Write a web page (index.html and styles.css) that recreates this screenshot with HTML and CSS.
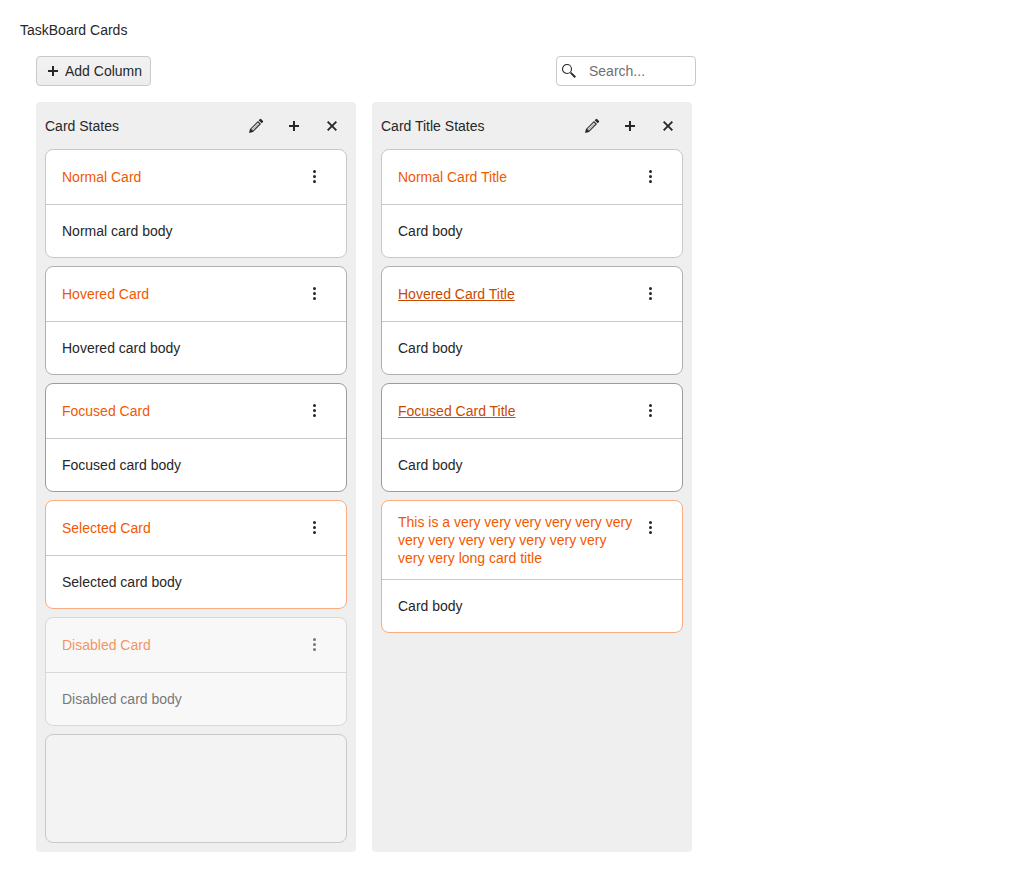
FILE: index.html
```html
<!DOCTYPE html>
<html lang="en">
<head>
<meta charset="utf-8">
<title>TaskBoard Cards</title>
<link rel="stylesheet" href="styles.css">
</head>
<body>
<svg class="sprite" aria-hidden="true">
  <symbol id="plus" viewBox="0 0 16 16"><path d="M7 3h2v4h4v2H9v4H7V9H3V7h4z"/></symbol>
  <symbol id="close" viewBox="0 0 16 16"><path d="M4.300 3 8 6.700 11.700 3 13 4.300 9.300 8 13 11.700 11.700 13 8 9.300 4.300 13 3 11.700 6.700 8 3 4.300z"/></symbol>
  <symbol id="pencil" viewBox="0 0 16 16"><path fill-rule="evenodd" d="M10 3 13 6 5 14 1 15 2 11zM9.900 4.500 3.300 11.100 4.900 12.700 11.500 6.100z"/><path d="M10.300 5.200 11 5.900 4.600 12.300 3.900 11.600z" opacity=".35"/><path d="M10.700 2.300 12 1Q12.500.700 13 1L15 3Q15.300 3.500 15 4L13.700 5.300z"/></symbol>
  <symbol id="dots" viewBox="0 0 16 16"><circle cx="7.500" cy="2.500" r="1.500"/><circle cx="7.500" cy="7.500" r="1.500"/><circle cx="7.500" cy="12.500" r="1.500"/></symbol>
  <symbol id="search" viewBox="0 0 16 16"><circle cx="6" cy="6" r="4.500" fill="none" stroke="currentColor" stroke-width="1.100"/><path d="M9 10.200 10.200 9 15 13.500 13.500 15z"/></symbol>
</svg>
<main class="page">
  <div class="page-title">TaskBoard Cards</div>
  <div class="board">
    <div class="toolbar">
      <button class="add-button" type="button"><svg class="icon"><use href="#plus"/></svg>Add Column</button>
      <label class="search"><svg class="icon" aria-hidden="true"><use href="#search"/></svg><input class="search-input" type="text" placeholder="Search..." aria-label="Search"></label>
    </div>
    <div class="columns">
      <section class="column">
        <header class="column-header">
          <div class="column-title">Card States</div>
          <button class="icon-button" type="button" aria-label="Edit column"><svg class="icon"><use href="#pencil"/></svg></button>
          <button class="icon-button" type="button" aria-label="Add card"><svg class="icon"><use href="#plus"/></svg></button>
          <button class="icon-button" type="button" aria-label="Delete column"><svg class="icon"><use href="#close"/></svg></button>
        </header>
        <div class="cards">
          <article class="card">
            <div class="card-header"><a class="card-title" href="#">Normal Card</a><button class="icon-button" type="button" aria-label="Card menu"><svg class="icon"><use href="#dots"/></svg></button></div>
            <div class="card-body">Normal card body</div>
          </article>
          <article class="card card-hovered">
            <div class="card-header"><a class="card-title" href="#">Hovered Card</a><button class="icon-button" type="button" aria-label="Card menu"><svg class="icon"><use href="#dots"/></svg></button></div>
            <div class="card-body">Hovered card body</div>
          </article>
          <article class="card card-focused">
            <div class="card-header"><a class="card-title" href="#">Focused Card</a><button class="icon-button" type="button" aria-label="Card menu"><svg class="icon"><use href="#dots"/></svg></button></div>
            <div class="card-body">Focused card body</div>
          </article>
          <article class="card card-selected">
            <div class="card-header"><a class="card-title" href="#">Selected Card</a><button class="icon-button" type="button" aria-label="Card menu"><svg class="icon"><use href="#dots"/></svg></button></div>
            <div class="card-body">Selected card body</div>
          </article>
          <article class="card card-disabled">
            <div class="card-header"><a class="card-title" href="#">Disabled Card</a><button class="icon-button" type="button" aria-label="Card menu"><svg class="icon"><use href="#dots"/></svg></button></div>
            <div class="card-body">Disabled card body</div>
          </article>
          <div class="placeholder"></div>
        </div>
      </section>
      <section class="column">
        <header class="column-header">
          <div class="column-title">Card Title States</div>
          <button class="icon-button" type="button" aria-label="Edit column"><svg class="icon"><use href="#pencil"/></svg></button>
          <button class="icon-button" type="button" aria-label="Add card"><svg class="icon"><use href="#plus"/></svg></button>
          <button class="icon-button" type="button" aria-label="Delete column"><svg class="icon"><use href="#close"/></svg></button>
        </header>
        <div class="cards">
          <article class="card">
            <div class="card-header"><a class="card-title" href="#">Normal Card Title</a><button class="icon-button" type="button" aria-label="Card menu"><svg class="icon"><use href="#dots"/></svg></button></div>
            <div class="card-body">Card body</div>
          </article>
          <article class="card card-hovered">
            <div class="card-header"><a class="card-title title-active" href="#">Hovered Card Title</a><button class="icon-button" type="button" aria-label="Card menu"><svg class="icon"><use href="#dots"/></svg></button></div>
            <div class="card-body">Card body</div>
          </article>
          <article class="card card-focused">
            <div class="card-header"><a class="card-title title-active" href="#">Focused Card Title</a><button class="icon-button" type="button" aria-label="Card menu"><svg class="icon"><use href="#dots"/></svg></button></div>
            <div class="card-body">Card body</div>
          </article>
          <article class="card card-selected">
            <div class="card-header"><a class="card-title" href="#">This is a very very very very very very very very very very very very very very very long card title</a><button class="icon-button" type="button" aria-label="Card menu"><svg class="icon"><use href="#dots"/></svg></button></div>
            <div class="card-body">Card body</div>
          </article>
        </div>
      </section>
    </div>
  </div>
</main>
</body>
</html>
```
FILE: styles.css
```css
* {
  box-sizing: border-box;
}

body {
  margin: 0;
  background: #fff;
  color: #272727;
  font: 14px/20px "Liberation Sans", Arial, sans-serif;
}

button,
input {
  font: inherit;
  color: inherit;
}

.sprite {
  display: none;
}

.icon {
  display: block;
  flex: none;
  width: 16px;
  height: 16px;
  fill: currentColor;
}

.page {
  padding: 20px;
}

.board {
  padding: 16px;
}

.toolbar {
  display: flex;
  justify-content: space-between;
  max-width: 660px;
  margin-bottom: 16px;
}

.add-button {
  display: flex;
  align-items: center;
  gap: 4px;
  height: 30px;
  padding: 0 8px;
  border: 1px solid #c9c9c9;
  border-radius: 4px;
  background: linear-gradient(#f2f2f2, #ededed);
}

.search {
  display: flex;
  align-items: center;
  width: 140px;
  height: 30px;
  padding: 0 4px;
  border: 1px solid #c9c9c9;
  border-radius: 4px;
}

.search-input {
  flex: 1;
  min-width: 0;
  padding: 0 0 0 12px;
  border: 0;
  outline: 0;
  background: transparent;
}

.search-input::placeholder {
  color: #707070;
  opacity: 1;
}

.columns {
  display: flex;
  gap: 16px;
}

.column {
  flex: 0 0 320px;
  padding: 1px 9px 9px;
  border-radius: 4px;
  background: #efefef;
}

.column-header {
  display: flex;
  align-items: center;
  gap: 8px;
  padding: 8px 0;
}

.column-title {
  flex: 1;
}

.icon-button {
  display: flex;
  flex: none;
  align-items: center;
  justify-content: center;
  width: 30px;
  height: 30px;
  padding: 0;
  border: 0;
  background: none;
}

.cards {
  display: flex;
  flex-direction: column;
  gap: 8px;
}

.card {
  border: 1px solid #c9c9c9;
  border-radius: 8px;
  background: #fff;
}

.card-header {
  display: flex;
  align-items: flex-start;
  padding: 12px 16px;
  border-bottom: 1px solid #c9c9c9;
}

.card-title {
  flex: 1;
  align-self: center;
  color: #f35800;
  line-height: 18px;
  text-decoration: none;
}

.title-active {
  color: #c94a00;
  text-decoration: underline;
}

.card-body {
  padding: 16px;
}

.card-hovered {
  border-color: #b0b0b0;
}

.card-focused {
  border-color: #9c9c9c;
}

.card-selected {
  border-color: #f9ac80;
}

.card-disabled {
  opacity: 0.6;
}

.placeholder {
  height: 109px;
  border: 1px solid #c9c9c9;
  border-radius: 8px;
  background: #f3f3f3;
}
```
